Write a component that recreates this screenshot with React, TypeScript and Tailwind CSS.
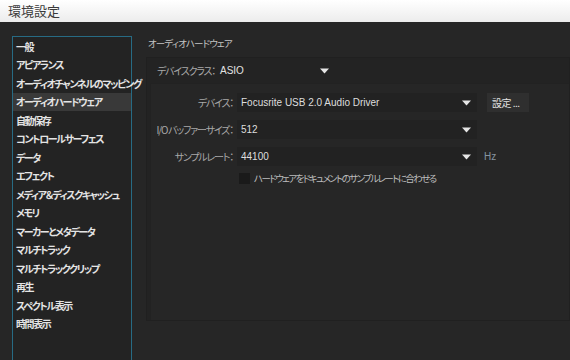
const items = [
  "一般",
  "アピアランス",
  "オーディオチャンネルのマッピング",
  "オーディオハードウェア",
  "自動保存",
  "コントロールサーフェス",
  "データ",
  "エフェクト",
  "メディア＆ディスクキャッシュ",
  "メモリ",
  "マーカーとメタデータ",
  "マルチトラック",
  "マルチトラッククリップ",
  "再生",
  "スペクトル表示",
  "時間表示",
];

const font = "font-['Noto_Sans_CJK_JP','Noto_Sans',sans-serif] [font-feature-settings:'palt']";

function Caret() {
  return (
    <svg width="9" height="6" viewBox="0 0 9 6" className="shrink-0">
      <path d="M0 0.5h9L4.5 5.5z" fill="#e6e6e6" />
    </svg>
  );
}

function Row({ label, value, extra }: { label: string; value: string; extra?: React.ReactNode }) {
  return (
    <div className="flex items-center h-[19px]">
      <div className="w-[86px] text-right text-[10px] tracking-[-1.2px] whitespace-nowrap text-[#a9a9a9] pr-[4px]">{label}</div>
      <div className="flex items-center w-[240px] h-[19px] bg-[#222222] pl-[4px] pr-[6px]">
        <span className="flex-1 text-[10px] text-[#dedede] font-['Liberation_Sans','Noto_Sans_CJK_JP',sans-serif]">{value}</span>
        <Caret />
      </div>
      {extra}
    </div>
  );
}

export default function App() {
  return (
    <div className={`w-[570px] h-[360px] overflow-hidden bg-[#262626] ${font}`}>
      <div className="h-[22px] bg-gradient-to-b from-[#ffffff] to-[#ececec] px-[8px] flex items-center text-[13px] text-[#3a3a3a]">
        環境設定
      </div>
      <div className="flex pt-[14px]">
        <div className="ml-[12px] w-[120px] h-[340px] shrink-0 border border-[#276b84] bg-[#232323]">
          {items.map((it, i) => (
            <div
              key={it}
              className={`h-[18.5px] flex items-center pl-[3px] text-[10px] tracking-[-1.4px] font-bold text-[#e4e4e4] whitespace-nowrap ${
                i === 3 ? "bg-[#393939]" : ""
              }`}
            >
              {it}
            </div>
          ))}
        </div>
        <div className="ml-[14px] flex-1 flex flex-col">
          <div className="h-[21px] pl-[2px] text-[9.5px] tracking-[-0.9px] text-[#c4c4c4]">オーディオハードウェア</div>
          <div className="h-[264px] bg-[#232323] border border-[#202020] flex flex-col">
            <div className="flex items-center h-[25px] pl-[10px]">
              <span className="w-[60px] text-[10px] tracking-[-1.2px] whitespace-nowrap text-[#a9a9a9]">デバイスクラス：</span>
              <div className="flex items-center w-[116px] pl-[3px] pr-[4px]">
                <span className="flex-1 text-[10px] text-[#e2e2e2] font-['Liberation_Sans',sans-serif]">ASIO</span>
                <Caret />
              </div>
            </div>
            <div className="flex-1 ml-[3px] bg-[#262626] border-l border-t border-[#222] pt-[9px] flex flex-col gap-[8px]">
              <Row
                label="デバイス："
                value="Focusrite USB 2.0 Audio Driver"
                extra={
                  <div className="ml-[10px] w-[42px] h-[19px] bg-[#2f2f2f] flex items-center pl-[5px] text-[10px] tracking-[-0.5px] text-[#e2e2e2]">
                    設定 ...
                  </div>
                }
              />
              <Row label="I/O バッファーサイズ：" value="512" />
              <Row
                label="サンプルレート："
                value="44100"
                extra={<span className="ml-[7px] text-[10px] text-[#8593a0] font-['Liberation_Sans',sans-serif]">Hz</span>}
              />
              <div className="flex items-center ml-[88px] -mt-[3px] gap-[4px]">
                <div className="w-[11px] h-[11px] bg-[#1a1a1a]" />
                <span className="text-[9.5px] tracking-[-1.6px] whitespace-nowrap text-[#bdbdbd]">ハードウェアをドキュメントのサンプルレートに合わせる</span>
              </div>
            </div>
          </div>
        </div>
      </div>
    </div>
  );
}
